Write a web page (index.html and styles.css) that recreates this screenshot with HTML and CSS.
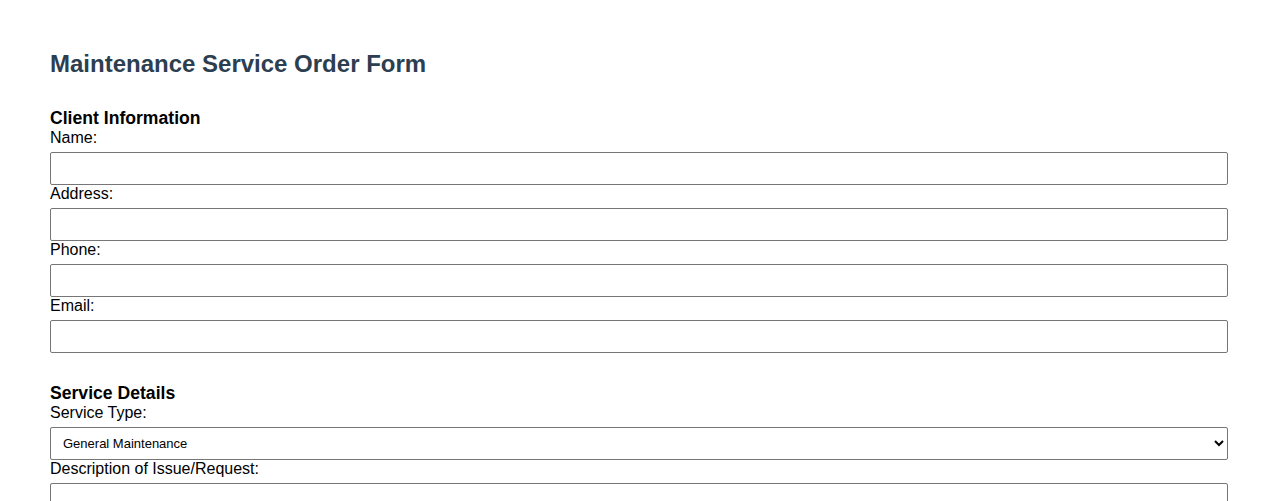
FILE: index.html
```html
<!DOCTYPE html>
<html lang="en">
<head>
<meta charset="utf-8">
<title>Maintenance Service Order Form</title>
<link rel="stylesheet" href="styles.css">
</head>
<body>
<div class="page">
  <h1 class="title">Maintenance Service Order Form</h1>
  <form class="form">
    <section class="section">
      <h3 class="section-title">Client Information</h3>
      <label class="label" for="name">Name:</label>
      <input class="field" id="name" type="text">
      <label class="label" for="address">Address:</label>
      <input class="field" id="address" type="text">
      <label class="label" for="phone">Phone:</label>
      <input class="field" id="phone" type="text">
      <label class="label" for="email">Email:</label>
      <input class="field" id="email" type="text">
    </section>
    <section class="section">
      <h3 class="section-title">Service Details</h3>
      <label class="label" for="type">Service Type:</label>
      <select class="field select" id="type">
        <option>General Maintenance</option>
        <option>Repair</option>
        <option>Installation</option>
      </select>
      <label class="label" for="desc">Description of Issue/Request:</label>
      <textarea class="field textarea" id="desc" rows="4"></textarea>
    </section>
  </form>
</div>
</body>
</html>
```
FILE: styles.css
```css
html, body {
  margin: 0;
  padding: 0;
  background: #ffffff;
}
body {
  font-family: "Liberation Sans", Arial, sans-serif;
  color: #000000;
  font-size: 16px;
}
.page {
  padding: 50px 50px 20px 50px;
}
.title {
  margin: 0 0 30px 0;
  font-size: 24px;
  font-weight: bold;
  color: #2c3e50;
}
.form {
  display: flex;
  flex-direction: column;
}
.section {
  display: flex;
  flex-direction: column;
  margin-bottom: 30px;
}
.section-title {
  margin: 0;
  font-size: 17.6px;
  line-height: 21px;
  font-weight: bold;
}
.label {
  display: block;
  margin-bottom: 5px;
}
.field {
  display: block;
  box-sizing: border-box;
  width: 100%;
  height: 33px;
  padding: 8px;
  border: 1px solid #767676;
  border-radius: 2px;
  font-family: "Liberation Sans", Arial, sans-serif;
  font-size: 13px;
  background: #ffffff;
  margin: 0;
}
.select {
  padding: 0 8px;
}
.textarea {
  height: 80px;
  resize: vertical;
}
```
